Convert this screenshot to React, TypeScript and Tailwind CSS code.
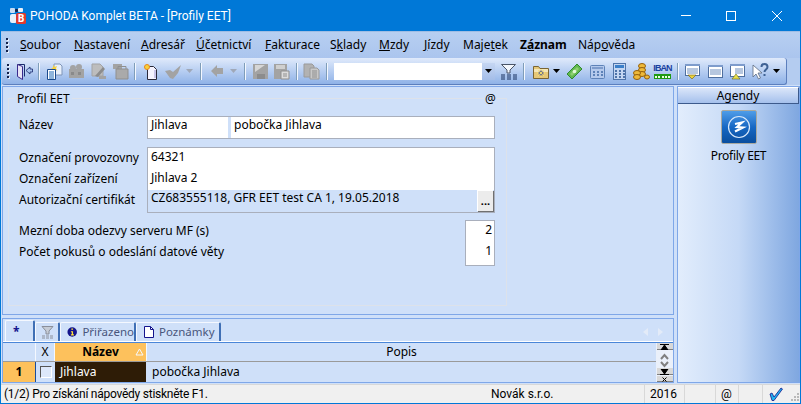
import type { ReactNode } from "react";

const font = { fontFamily: '"Noto Sans", Tahoma, sans-serif' };
const segoe = { fontFamily: 'Roboto, "Noto Sans", sans-serif' };

const gray = "#a3a3a3";

/* ---------------- toolbar parts ---------------- */
function Slot({ className, children }: { className: string; children?: ReactNode }) {
  return <div className={`flex shrink-0 items-center justify-center ${className}`}>{children}</div>;
}

function Ic({ children }: { children: ReactNode }) {
  return (
    <svg width="17" height="17" viewBox="0 0 17 17" className="shrink-0">
      {children}
    </svg>
  );
}

function Sep() {
  return <div className="h-[17px] w-[1px] bg-[#f4f8ff] shadow-[-1px_0_0_#7f9db9]" />;
}

function Grip() {
  return (
    <div className="flex h-[14px] w-[3px] shrink-0 flex-col justify-between">
      {[0, 1, 2, 3].map((i) => (
        <div key={i} className="h-[2px] w-[2px] bg-[#14224a] shadow-[1px_1px_0_#eef4ff]" />
      ))}
    </div>
  );
}

function Caret({ light }: { light?: boolean }) {
  return (
    <svg width="7" height="4" viewBox="0 0 7 4" className="shrink-0">
      <path d="M0 0h7L3.5 4z" fill={light ? "#9fa8b8" : "#000"} />
    </svg>
  );
}

function Toolbar() {
  return (
    <div className="flex h-[27px] shrink-0 bg-[#b4ccf0]">
      <div className="ml-[1px] flex h-[27px] w-[785px] items-center rounded-[3px] border-r border-b border-[#5c7fbd] bg-gradient-to-b from-[#e0eafb] to-[#8fb2e7] pl-[5px]">
        <Grip />
        <Slot className="ml-[3px] w-[22px]">
          <Ic>
            <path d="M1.5 1.500h7v12" fill="none" stroke="#1a2a6c" />
            <path d="M1.500 1.500l5 2v13l-5-3z" fill="#e8e4f6" stroke="#3a2a8c" />
            <path d="M10 7.500l4-3.500v2h2.500v3H14v2z" fill="#a8c4ee" stroke="#1a2a6c" strokeWidth=".8" />
          </Ic>
        </Slot>
        <Slot className="w-[8px]"><Sep /></Slot>
        <Slot className="w-[22px]">
          <Ic>
            <path d="M8 1h6l2 2v9H8z" fill="#e8f0fb" stroke="#7f95b8" />
            <path d="M7 2l1.500 2L11 3l-1 2.500 1.500 2-2.500-.5-1.500 2-.5-2.500L5 6l2-1.500z" fill="#f7d23c" />
            <path d="M1.500 6.500h8v10h-8z" fill="#fff" stroke="#1a4a8c" />
            <path d="M3 9h5M3 11h5M3 13h5M3 15h5" stroke="#1f6ab8" />
          </Ic>
        </Slot>
        <Slot className="w-[22px]">
          <Ic>
            <path d="M1 6h15v9H1z" fill={gray} />
            <circle cx="5" cy="5" r="3" fill={gray} />
            <circle cx="11" cy="4" r="3" fill={gray} />
            <path d="M3 9h3v3H3zM10 9h3v3h-3z" fill="#8a8a8a" />
          </Ic>
        </Slot>
        <Slot className="w-[22px]">
          <Ic>
            <path d="M2 1h8l3 3v9H2z" fill="#bdbdbd" stroke={gray} />
            <path d="M5 13l8-9 2 2-7 8z" fill="#8c8c8c" />
            <path d="M9 13h7v3H9z" fill={gray} />
          </Ic>
        </Slot>
        <Slot className="w-[22px]">
          <Ic>
            <path d="M1 1h9v5H1z" fill={gray} />
            <path d="M4 6h12v10H4z" fill="#aaa" stroke="#8f8f8f" />
            <path d="M6 6V3.500h8V6" fill="none" stroke="#8f8f8f" />
          </Ic>
        </Slot>
        <Slot className="w-[8px]"><Sep /></Slot>
        <Slot className="w-[24px]">
          <Ic>
            <path d="M4.500 3.500h6l3 3v10h-9z" fill="#f5f3ff" stroke="#2a2a3a" />
            <path d="M11 15h2V7h-2z" fill="#c9c4ea" />
            <circle cx="4" cy="4" r="2.500" fill="#f7d23c" stroke="#e8861a" />
          </Ic>
        </Slot>
        <Slot className="w-[20px]">
          <Ic>
            <path d="M0 8l5-1 3 2 8-7-3 8-5 6-3-1z" fill={gray} />
          </Ic>
        </Slot>
        <Slot className="w-[12px]"><Caret light /></Slot>
        <Slot className="w-[12px]"><Sep /></Slot>
        <Slot className="w-[19px]">
          <svg width="12" height="12" viewBox="0 0 12 12">
            <path d="M0 6l6-6v3h6v6H6v3z" fill={gray} />
          </svg>
        </Slot>
        <Slot className="w-[15px]"><Caret light /></Slot>
        <Slot className="w-[8px]"><Sep /></Slot>
        <Slot className="w-[22px]">
          <Ic>
            <path d="M1 1h15v15H1z" fill={gray} />
            <path d="M3 2h10L3 9z" fill="#d6d6d6" />
            <path d="M5 11h8v5H5z" fill="#8c8c8c" />
          </Ic>
        </Slot>
        <Slot className="w-[21px]">
          <Ic>
            <path d="M1 1h13v15H1z" fill={gray} />
            <path d="M3 2h9v4H3z" fill="#cfcfcf" />
            <path d="M8 8h8v8H8z" fill="#dcdcdc" stroke="#8f8f8f" />
            <path d="M10 11h4M10 13h4" stroke="#8f8f8f" />
          </Ic>
        </Slot>
        <Slot className="w-[10px]"><Sep /></Slot>
        <Slot className="w-[19px]">
          <Ic>
            <path d="M1 1h8l2 2v11H1z" fill="#b2b2b2" stroke="#9a9a9a" />
            <path d="M7 5h7l2 2v9H7z" fill="#c8c8c8" stroke="#9a9a9a" />
            <path d="M9 8h5M9 10h5M9 12h5M9 14h5" stroke="#8f8f8f" />
          </Ic>
        </Slot>
        <Slot className="w-[13px]"><Sep /></Slot>
        {/* combo */}
        <div className="flex h-[17px] w-[161px] shrink-0 items-center justify-end bg-white">
          <div className="flex h-full w-[13px] items-center justify-center bg-gradient-to-b from-[#c5d6f2] to-[#a4bde8]">
            <Caret />
          </div>
        </div>
        <Slot className="w-[26px]">
          <Ic>
            <path d="M1.500 1.500h14L10 7v3H7V7z" fill="#f2f6fc" stroke="#4a5568" />
            <path d="M1 12h4M7 12h4M13 12h4M1 14h4M7 14h4M13 14h4M1 16h4M7 16h4M13 16h4" stroke="#1a3360" />
          </Ic>
        </Slot>
        <Slot className="w-[6px]"><Sep /></Slot>
        <Slot className="w-[26px]">
          <Ic>
            <path d="M1.500 3.500h5l1.500 2h8.500v10h-15z" fill="#e6c878" stroke="#7a6534" />
            <path d="M2 6h14v3H2z" fill="#f4e6b8" />
            <circle cx="9" cy="10" r="2.500" fill="#1f2f9a" />
            <path d="M9 6v8M5 10h8M6 7l6 6M12 7l-6 6" stroke="#ffe66a" strokeWidth=".8" />
          </Ic>
        </Slot>
        <Slot className="w-[7px]"><Caret /></Slot>
        <Slot className="w-[29px]">
          <Ic>
            <path d="M1 11L11 1l5 5L6 16z" fill="#62b84e" stroke="#2f8a2f" />
            <path d="M4 11l7-7 2 2-7 7z" fill="#8ed070" />
            <circle cx="8.500" cy="8.500" r="1.800" fill="#e4f8d8" />
          </Ic>
        </Slot>
        <Slot className="w-[16px]">
          <Ic>
            <rect x="1.500" y="2.500" width="14" height="13" rx="1" fill="#b4c9ec" stroke="#5d82b8" />
            <path d="M3 4h11v2H3z" fill="#7e9ccc" />
            <path d="M4 9h2M8 9h2M12 9h2M4 12h2M8 12h2M12 12h2" stroke="#5d82b8" strokeWidth="2" />
          </Ic>
        </Slot>
        <Slot className="w-[28px]">
          <Ic>
            <rect x="2.500" y=".5" width="12" height="16" fill="#c4d6f2" stroke="#4f74aa" />
            <path d="M4 2h9v3H4z" fill="#3a7fc9" />
            <path d="M4 8h2M8 8h2M12 8h2M4 11h2M8 11h2M12 11h2M4 14h2M8 14h2M12 14h2" stroke="#4f74aa" strokeWidth="2" />
          </Ic>
        </Slot>
        <Slot className="w-[16px]">
          <Ic>
            <ellipse cx="9" cy="3" rx="3.500" ry="2.500" fill="#eeb93a" stroke="#96600a" />
            <ellipse cx="9" cy="7" rx="3.500" ry="2.500" fill="#eeb93a" stroke="#96600a" />
            <ellipse cx="9" cy="11" rx="3.500" ry="2.500" fill="#eeb93a" stroke="#96600a" />
            <ellipse cx="4" cy="10" rx="3.500" ry="2.500" fill="#eeb93a" stroke="#96600a" />
            <ellipse cx="4" cy="14" rx="3.500" ry="2.500" fill="#eeb93a" stroke="#96600a" />
            <ellipse cx="14" cy="14" rx="2.500" ry="2" fill="#eeb93a" stroke="#96600a" />
          </Ic>
        </Slot>
        <Slot className="w-[27px]">
          <div className="flex w-[17px] flex-col items-center">
            <div className="font-['Liberation_Sans'] text-[9px] leading-[11px] font-bold tracking-[-0.9px] whitespace-nowrap text-[#1b3fa0]">IBAN</div>
            <div className="flex h-[5px] w-[17px] items-center justify-between bg-[#1f9a12] px-[1px]">
              <div className="h-[2px] w-[2px] bg-[#eaffe0]" />
              <div className="h-[2px] w-[2px] bg-[#eaffe0]" />
              <div className="h-[2px] w-[2px] bg-[#eaffe0]" />
              <div className="h-[2px] w-[2px] bg-[#eaffe0]" />
              <div className="h-[2px] w-[2px] bg-[#eaffe0]" />
            </div>
          </div>
        </Slot>
        <Slot className="w-[4px]"><Sep /></Slot>
        <Slot className="w-[25px]">
          <Ic>
            <rect x="1.500" y="1.500" width="14" height="11" fill="#fff" stroke="#4f6f9f" />
            <path d="M1 2h15" stroke="#7e9ccc" strokeWidth="2" />
            <path d="M3 6h11M3 8h11M3 10h11" stroke="#6f8fbf" />
            <path d="M4 12h8l-4 4z" fill="#ecd23a" stroke="#6a5a1a" strokeWidth=".6" />
          </Ic>
        </Slot>
        <Slot className="w-[20px]">
          <Ic>
            <rect x="1.500" y="2.500" width="14" height="12" fill="#fff" stroke="#4f6f9f" />
            <path d="M1 3h15" stroke="#7e9ccc" strokeWidth="2" />
            <path d="M3 7h11M3 9h11M3 11h11" stroke="#6f8fbf" />
          </Ic>
        </Slot>
        <Slot className="w-[25px]">
          <Ic>
            <rect x="1.500" y="1.500" width="14" height="12" fill="#fff" stroke="#4f6f9f" />
            <path d="M1 2h15" stroke="#7e9ccc" strokeWidth="2" />
            <path d="M6 6h8M6 8h8M6 10h8" stroke="#6f8fbf" />
            <path d="M3 16l4-5 4 5z" fill="#e8e04a" stroke="#6a6a1a" strokeWidth=".6" />
          </Ic>
        </Slot>
        <Slot className="w-[20px]">
          <Ic>
            <path d="M1 2v12l3-3 2.500 5 2-1-2.500-5h4z" fill="#fff" stroke="#5a6a80" strokeWidth=".8" />
            <path d="M9.500 4c0-4 6-4 6 0 0 2.500-3 2.500-3 5M12.500 11v2" stroke="#3f6294" strokeWidth="2" fill="none" />
          </Ic>
        </Slot>
        <Slot className="w-[12px]"><Caret /></Slot>
      </div>
    </div>
  );
}

/* ---------------- formular ---------------- */
function Label({ children }: { children: ReactNode }) {
  return <div className="text-[12px] leading-[21px] text-black">{children}</div>;
}

function Form() {
  return (
    <div className="relative flex-1 border border-[#7fa7e8] bg-[#cfe0f9] pt-[11px] pl-[5px]">
      <div className="absolute top-[4px] left-[12px] bg-[#cfe0f9] px-[2px] text-[12px] leading-[16px]">Profil EET</div>
      <div className="absolute top-[4px] left-[481px] bg-[#cfe0f9] px-[1px] text-[12px] leading-[16px]">@</div>
      <div className="h-[208px] w-[499px] border border-[#dde2ea] pt-[17px] pl-[10px]">
        <div className="flex items-start">
          <div className="w-[128px] text-[12px] leading-[17px]">Název</div>
          <div className="flex h-[23px] w-[348px] border border-[#a9afbc] bg-white text-[12px] leading-[16px]">
            <div className="w-[83px] border-r-[3px] border-[#cfe0f9] pl-[3px]">Jihlava</div>
            <div className="pl-[3px]">pobočka Jihlava</div>
          </div>
        </div>
        <div className="mt-[8px] flex items-start">
          <div className="w-[128px]">
            <Label>Označení provozovny</Label>
            <Label>Označení zařízení</Label>
            <Label>Autorizační certifikát</Label>
          </div>
          <div className="h-[66px] w-[348px] border border-[#a9afbc] bg-white text-[12px]">
            <div className="h-[20px] pl-[3px] leading-[18px]">64321</div>
            <div className="h-[22px] pl-[3px] leading-[19px]">Jihlava 2</div>
            <div className="flex h-[22px] items-start justify-between bg-[#cfe0f9] pl-[3px] leading-[16px]">
              <span>CZ683555118, GFR EET test CA 1, 19.05.2018</span>
              <div className="mr-[1px] flex h-[21px] w-[16px] items-center justify-center border-t border-l border-white bg-[#ececec] text-[11px] leading-[10px] font-bold shadow-[1px_1px_0_#707070]">
                ...
              </div>
            </div>
          </div>
        </div>
        <div className="mt-[7px] flex items-start">
          <div className="w-[446px]">
            <Label>Mezní doba odezvy serveru MF (s)</Label>
            <Label>Počet pokusů o odeslání datové věty</Label>
          </div>
          <div className="h-[46px] w-[30px] border border-[#a9afbc] bg-white pr-[2px] text-right text-[12px]">
            <div className="leading-[18px]">2</div>
            <div className="leading-[24px]">1</div>
          </div>
        </div>
      </div>
    </div>
  );
}

/* ---------------- seznam ---------------- */
function Tab({ className, children }: { className: string; children: ReactNode }) {
  return (
    <div
      className={`flex h-[19px] items-center rounded-t-[2px] border-t border-r-2 border-l border-t-[#f4f8ff] border-r-[#3f6fb5] border-l-[#f4f8ff] text-[11.5px] text-[#49567c] ${className}`}
    >
      {children}
    </div>
  );
}

function Grid() {
  return (
    <div className="mt-[3px] h-[65px] shrink-0 border border-[#7fa7e8] bg-[#cfe0f9]">
      <div className="flex h-[22px] items-end pl-[2px]">
        <div className="flex h-[21px] w-[30px] rounded-t-[2px] border-t border-r-2 border-l border-t-[#f4f8ff] border-r-[#3f6fb5] border-l-[#f4f8ff] pt-[5px] pl-[7px]">
          <span className="text-[12px] leading-[12px] font-bold text-[#14148c]">*</span>
        </div>
        <Tab className="w-[25px] justify-center">
          <svg width="13" height="15" viewBox="0 0 13 15">
            <path d="M1 1.500h11L8 6v3H5V6z" fill="#c6ccd6" stroke="#8a8f9a" />
            <path d="M1 11h3M5 11h3M9 11h3M1 13h3M5 13h3M9 13h3" stroke="#8a8f9a" />
          </svg>
        </Tab>
        <Tab className="w-[76px] gap-[5px] pl-[6px]">
          <svg width="12" height="12" viewBox="0 0 12 12">
            <circle cx="6" cy="6" r="5.500" fill="#14148c" />
            <path d="M5 2h2v1.500H5zM4.500 5H7v3.500h1V10H4.500V8.500h1V6.400h-1z" fill="#ffe23a" />
          </svg>
          Přiřazeno
        </Tab>
        <Tab className="w-[85px] gap-[5px] pl-[7px]">
          <svg width="10" height="12" viewBox="0 0 10 12">
            <path d="M.5.500h6l3 3v8h-9z" fill="#fff" stroke="#14148c" />
            <path d="M6.500.500v3h3" fill="none" stroke="#14148c" />
          </svg>
          Poznámky
        </Tab>
        <div className="ml-auto flex h-[19px] items-center gap-[10px] pr-[10px]">
          <svg width="5" height="8" viewBox="0 0 5 8">
            <path d="M5 0v8L0 4z" fill="#e3ebf8" />
          </svg>
          <svg width="5" height="8" viewBox="0 0 5 8">
            <path d="M0 0v8l5-4z" fill="#e3ebf8" />
          </svg>
        </div>
      </div>
      <div className="h-[2px] border-t border-white bg-[#4a86d8]" />
      <div className="flex">
        <div className="min-w-0 flex-1">
          <div className="flex h-[19px] items-stretch border-b border-[#9a9a9a] text-[12px] leading-[18px]">
            <div className="w-[33px] border-r border-[#f4f8ff]" />
            <div className="w-[19px] border-r border-[#f4f8ff] text-center">X</div>
            <div className="relative w-[91px] bg-[#fdc15c] text-center font-bold">
              Název
              <svg width="9" height="8" viewBox="0 0 9 8" className="absolute top-[5px] right-[2px]">
                <path d="M4.500 1L8 7H1z" fill="none" stroke="#f4f8ff" />
              </svg>
            </div>
            <div className="flex-1 border-l border-[#f4f8ff] text-center">Popis</div>
          </div>
          <div className="flex h-[20px] items-stretch text-[12px] leading-[19px]">
            <div className="w-[33px] border-r border-[#1b4d9c] bg-[#fdc15c] text-center font-bold">1</div>
            <div className="flex w-[19px] items-center justify-center">
              <div className="h-[12px] w-[12px] border border-[#555] border-r-white border-b-white bg-[#dde8fa]" />
            </div>
            <div className="w-[91px] bg-[#2e1c06] pl-[5px] text-white">Jihlava</div>
            <div className="flex-1 pl-[6px]">pobočka Jihlava</div>
          </div>
        </div>
        <div className="flex w-[17px] shrink-0 flex-col items-center bg-[#eaf0fa]">
          <div className="flex h-[7px] w-[16px] items-center justify-center bg-[#d8d8d8] shadow-[inset_0_-1px_0_#808080]">
            <svg width="9" height="6" viewBox="0 0 9 6">
              <path d="M0 .5h9M4.500 1L8 6H1z" stroke="#000" fill="#000" />
            </svg>
          </div>
          <svg width="9" height="7" viewBox="0 0 9 7" className="mt-[3px]">
            <path d="M1 6l3.500-4L8 6" stroke="#808080" strokeWidth="2" fill="none" />
          </svg>
          <svg width="9" height="7" viewBox="0 0 9 7" className="mt-[1px]">
            <path d="M1 1l3.500 4L8 1" stroke="#808080" strokeWidth="2" fill="none" />
          </svg>
          <div className="flex h-[7px] w-[16px] items-center justify-center bg-[#d8d8d8] shadow-[inset_0_-1px_0_#808080]">
            <svg width="9" height="6" viewBox="0 0 9 6">
              <path d="M0 5.500h9M4.500 5L8 0H1z" stroke="#000" fill="#000" />
            </svg>
          </div>
          <div className="mt-[1px] flex h-[6px] w-[16px] items-center justify-center bg-[#d8d8d8] shadow-[inset_0_-1px_0_#808080]">
            <svg width="5" height="5" viewBox="0 0 5 5">
              <path d="M.5.500l4 4M4.500.500l-4 4" stroke="#000" />
            </svg>
          </div>
        </div>
      </div>
    </div>
  );
}

/* ---------------- agendy ---------------- */
function Agendas() {
  return (
    <div className="ml-[3px] flex w-[123px] shrink-0 flex-col border border-[#7fa7e8] bg-gradient-to-r from-[#e2edfc] via-[#c5d9f6] to-[#7fa7e0]">
      <div className="h-[17px] border-t border-r border-b border-white border-r-[#3c5a8c] border-b-[#3c5a8c] bg-gradient-to-b from-[#dbe6f9] to-[#a5c0ec] text-center text-[12px] leading-[16px]">
        Agendy
      </div>
      <div className="mt-[6px] flex flex-col items-center">
        <div className="flex h-[34px] w-[36px] items-center justify-center rounded-[2px] border border-[#a9a9a0] bg-gradient-to-b from-[#4f9de8] via-[#1668c4] to-[#0a4e9e]">
          <svg width="24" height="24" viewBox="0 0 24 24">
            <circle cx="12" cy="12" r="10.500" fill="none" stroke="#d8e8fa" strokeWidth="1.200" />
            <path d="M8 9l7-1.500-5 4.500 6 .5-8 4" fill="none" stroke="#fff" strokeWidth="2.200" />
          </svg>
        </div>
        <div className="mt-[3px] text-[12px] leading-[18px] tracking-[-0.3px]">Profily EET</div>
      </div>
    </div>
  );
}

/* ---------------- status ---------------- */
function StatusBar() {
  return (
    <div className="flex h-[19px] shrink-0 items-stretch border-t border-[#d8d8d8] bg-[#f0f0f0] text-[12px] leading-[18px]" style={segoe}>
      <div className="w-[490px] pl-[3px] tracking-[-0.25px]">(1/2) Pro získání nápovědy stiskněte F1.</div>
      <div className="w-[153px]">Novák s.r.o.</div>
      <div className="w-[40px] border-l border-[#d8d8d8] pl-[5px]">2016</div>
      <div className="w-[31px] border-l border-[#d8d8d8]" />
      <div className="w-[23px] border-l border-[#d8d8d8] pl-[5px]">@</div>
      <div className="w-[24px] border-l border-[#d8d8d8]" />
      <div className="relative flex-1 border-l border-[#d8d8d8] pl-[6px]">
        <svg width="14" height="14" viewBox="0 0 14 14" className="mt-[2px]">
          <path d="M1 7l2-1 2 4 7-9 1.500 1L5 13.500H3z" fill="#1eb4f0" stroke="#14148c" strokeWidth=".8" />
        </svg>
        <svg width="9" height="9" viewBox="0 0 9 9" className="absolute right-[1px] bottom-[1px]">
          <path d="M7 0h2v2H7zM4 3h2v2H4zM7 3h2v2H7zM1 6h2v2H1zM4 6h2v2H4zM7 6h2v2H7z" fill="#b8b8b8" />
        </svg>
      </div>
    </div>
  );
}

export default function App() {
  return (
    <div className="flex h-[404px] w-[801px] flex-col overflow-hidden border-x border-b border-[#0078d7] bg-[#cfe0f9]" style={font}>
      {/* titulek */}
      <div className="-mx-[1px] flex h-[31px] shrink-0 items-center bg-[#0078d7] text-white">
        <svg width="18" height="18" viewBox="0 0 18 18" className="ml-[9px] shrink-0">
          <rect x="1" y="1" width="5" height="5" rx="1" fill="#c8dcf4" />
          <rect x="9" y="1" width="5" height="4" rx="1" fill="#e8f0fa" />
          <rect x="6" y="2" width="3" height="3" rx="1" fill="#14224a" />
          <rect x="1" y="7" width="7" height="9" rx="2" fill="#e8f0fa" />
          <rect x="7" y="6" width="10" height="11" rx="1.500" fill="#e0392e" />
          <text x="12" y="15" textAnchor="middle" fontSize="10" fontWeight="700" fill="#fff">B</text>
        </svg>
        <div className="ml-[3px] text-[12px]" style={segoe}>POHODA Komplet BETA - [Profily EET]</div>
        <div className="ml-auto flex items-center pr-[19px]">
          <div className="h-[1px] w-[10px] bg-white" />
          <div className="ml-[35px] h-[10px] w-[10px] border border-white" />
          <svg width="10" height="10" viewBox="0 0 10 10" className="ml-[36px]">
            <path d="M0 0l10 10M10 0L0 10" stroke="#fff" />
          </svg>
        </div>
      </div>
      {/* menu */}
      <div className="flex h-[27px] shrink-0 items-center border-t border-[#9fbde4] bg-gradient-to-b from-[#b7cff1] to-[#abc5ee] pl-[5px] text-[12px]">
        <Grip />
        <div className="ml-[11px] flex">
          <span className="w-[54px]"><u>S</u>oubor</span>
          <span className="w-[67px]"><u>N</u>astavení</span>
          <span className="w-[55px]"><u>A</u>dresář</span>
          <span className="w-[69px]"><u>Ú</u>četnictví</span>
          <span className="w-[65px]"><u>F</u>akturace</span>
          <span className="w-[49px]">S<u>k</u>lady</span>
          <span className="w-[45px]"><u>M</u>zdy</span>
          <span className="w-[39px]"><u>J</u>ízdy</span>
          <span className="w-[57px]">Maje<u>t</u>ek</span>
          <span className="w-[58px] font-bold">Z<u>á</u>znam</span>
          <span>Náp<u>o</u>věda</span>
        </div>
      </div>
      <Toolbar />
      <div className="mt-[1px] mb-[1px] ml-[1px] flex min-h-0 flex-1">
        <div className="flex min-w-0 flex-1 flex-col">
          <Form />
          <Grid />
        </div>
        <Agendas />
      </div>
      <StatusBar />
    </div>
  );
}
